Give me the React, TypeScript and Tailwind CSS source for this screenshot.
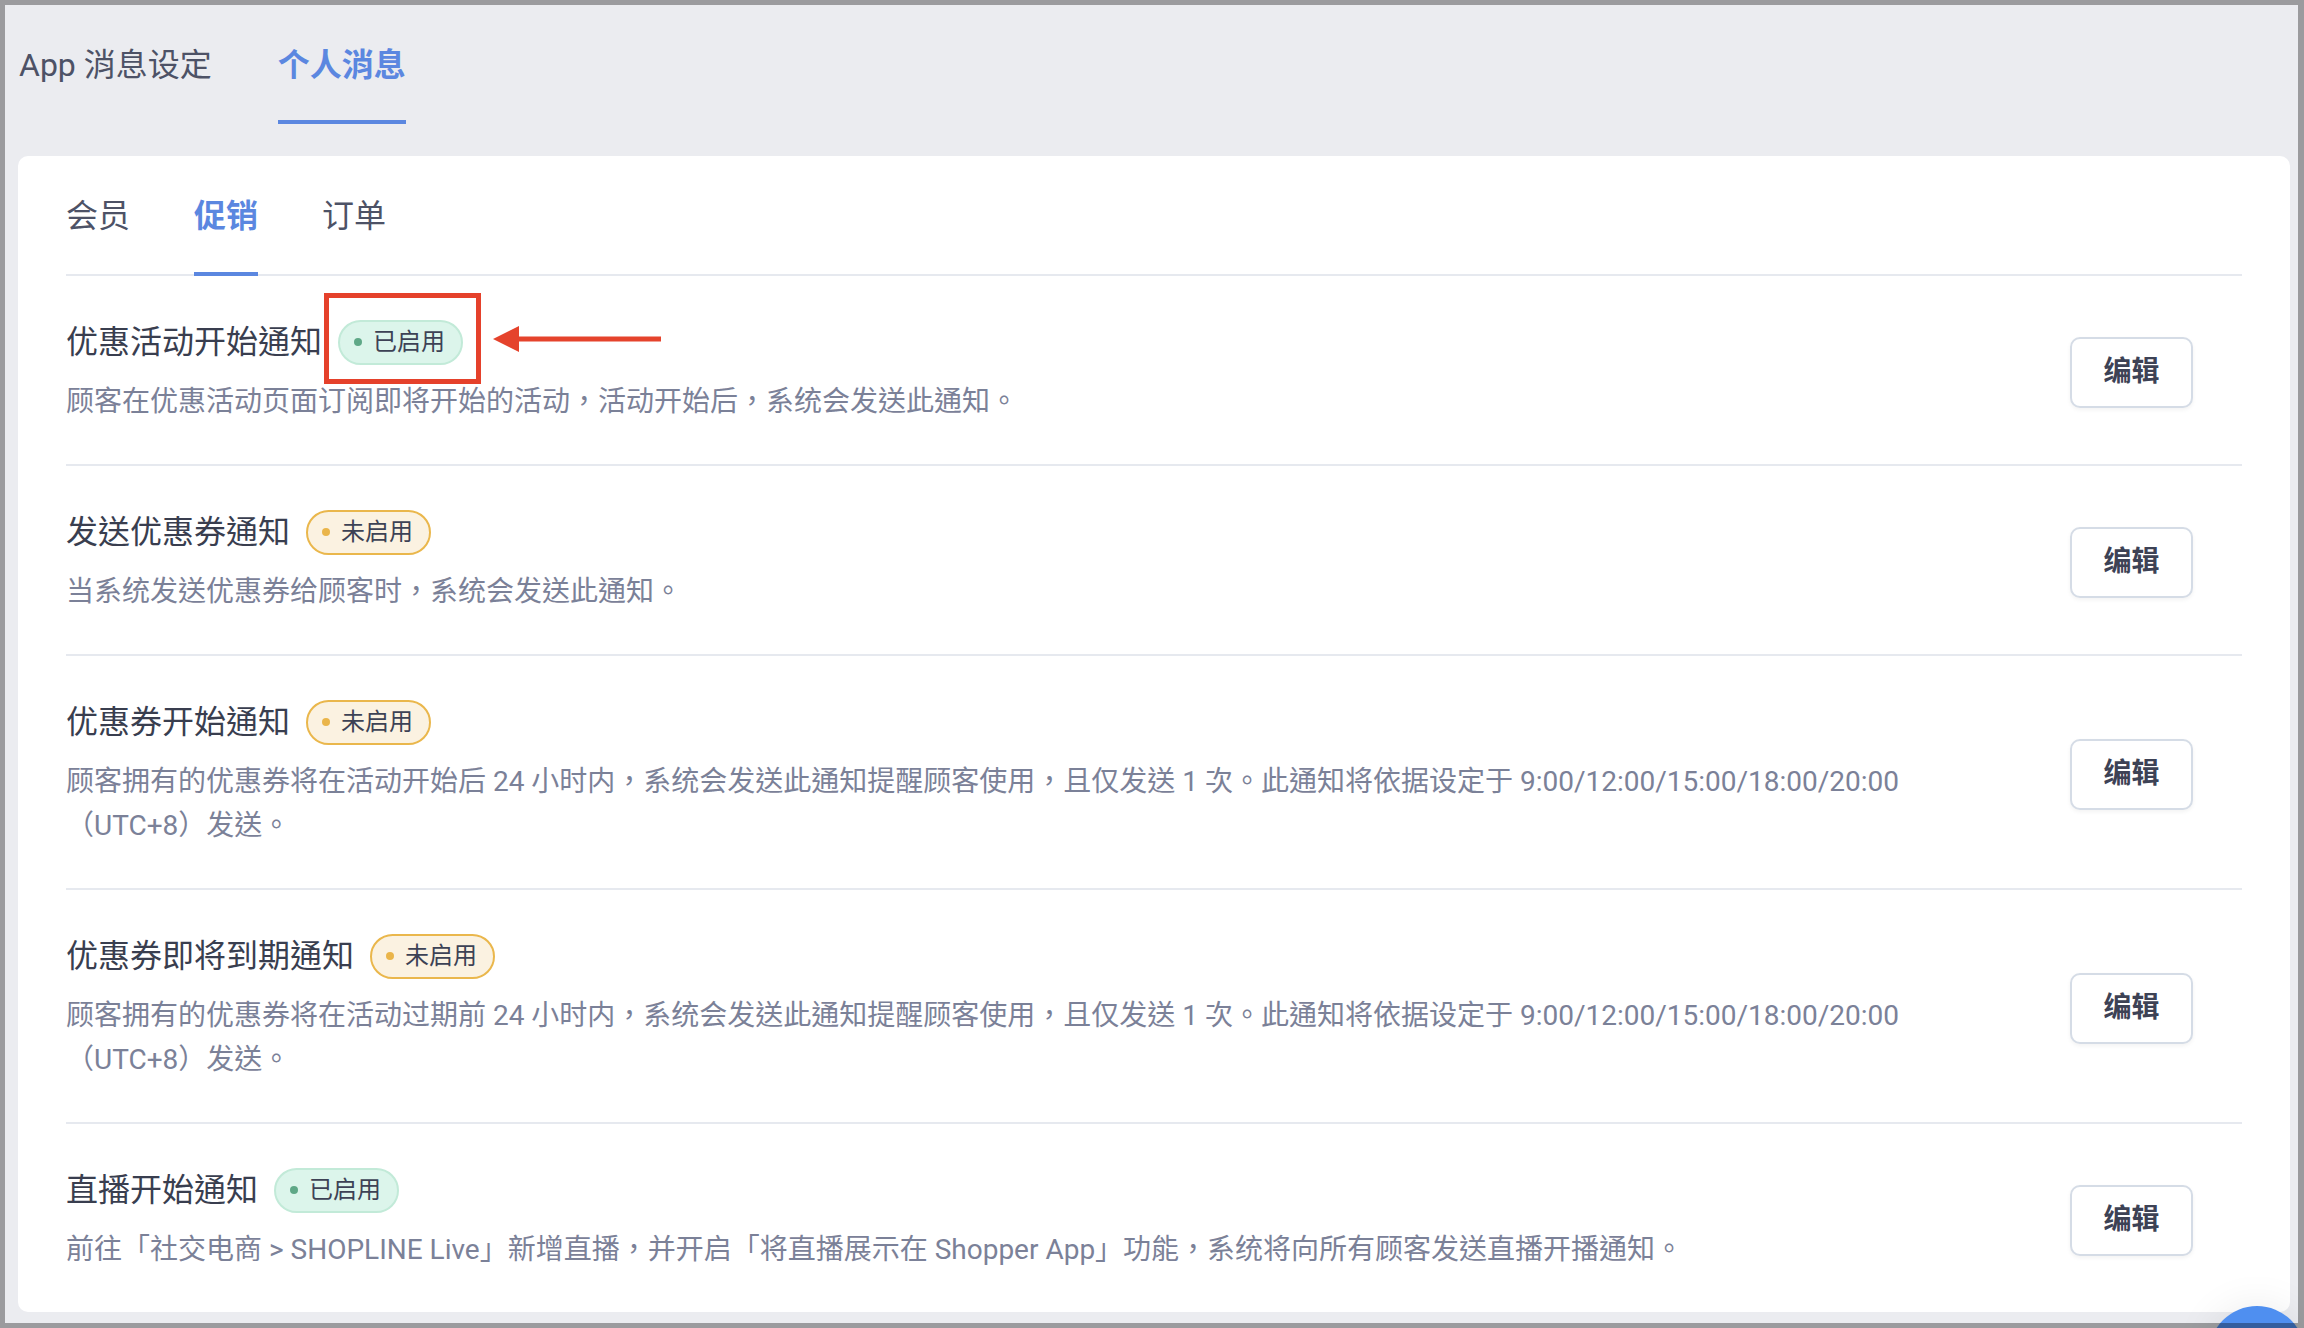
const font = "font-[Roboto,'Noto_Sans_CJK_TC',sans-serif]";

type Notice = {
  title: string;
  enabled: boolean;
  desc: string;
  marked?: boolean;
};

const notices: Notice[] = [
  {
    title: '优惠活动开始通知',
    enabled: true,
    desc: '顾客在优惠活动页面订阅即将开始的活动，活动开始后，系统会发送此通知。',
    marked: true,
  },
  {
    title: '发送优惠券通知',
    enabled: false,
    desc: '当系统发送优惠券给顾客时，系统会发送此通知。',
  },
  {
    title: '优惠券开始通知',
    enabled: false,
    desc: '顾客拥有的优惠券将在活动开始后 24 小时内，系统会发送此通知提醒顾客使用，且仅发送 1 次。此通知将依据设定于 9:00/12:00/15:00/18:00/20:00（UTC+8）发送。',
  },
  {
    title: '优惠券即将到期通知',
    enabled: false,
    desc: '顾客拥有的优惠券将在活动过期前 24 小时内，系统会发送此通知提醒顾客使用，且仅发送 1 次。此通知将依据设定于 9:00/12:00/15:00/18:00/20:00（UTC+8）发送。',
  },
  {
    title: '直播开始通知',
    enabled: true,
    desc: '前往「社交电商 > SHOPLINE Live」新增直播，并开启「将直播展示在 Shopper App」功能，系统将向所有顾客发送直播开播通知。',
  },
];

function StatusBadge({ enabled }: { enabled: boolean }) {
  if (enabled) {
    return (
      <span className="inline-flex items-center h-[45px] rounded-full border-2 border-[#c2ead8] bg-[#dcf5eb] pl-[14px] pr-[16px]">
        <span className="w-2 h-2 rounded-full bg-[#5fa887]" />
        <span className="ml-[11px] text-[24px] leading-none text-[#3d4255]">已启用</span>
      </span>
    );
  }
  return (
    <span className="inline-flex items-center h-[45px] rounded-full border-2 border-[#eab74c] bg-[#fbf2e1] pl-[14px] pr-[16px]">
      <span className="w-2 h-2 rounded-full bg-[#eab54a]" />
      <span className="ml-[11px] text-[24px] leading-none text-[#3d4255]">未启用</span>
    </span>
  );
}

function NoticeRow({ item, last }: { item: Notice; last: boolean }) {
  return (
    <div className={last ? 'pt-[44px] pb-[40px]' : 'pt-[44px] pb-[40px] border-b-2 border-[#e6e9ef]'}>
      <div className="flex items-center pr-[49px]">
        <div className="flex-1 min-w-0">
          <div className="flex items-center gap-4 h-[44px]">
            <span className="text-[32px] leading-[44px] text-[#393e4f]">{item.title}</span>
            <span className="relative inline-flex">
              <StatusBadge enabled={item.enabled} />
              {item.marked && (
                <>
                  {/* annotation box + arrow */}
                  <span className="absolute -left-[14px] -top-[27px] w-[157px] h-[91px] border-[5px] border-[#e5412b] pointer-events-none" />
                  <svg
                    className="absolute left-[155px] top-[6px]"
                    width="170"
                    height="26"
                    viewBox="0 0 170 26"
                  >
                    <polygon points="0,13 26,0 26,26" fill="#e5432c" />
                    <rect x="24" y="10.5" width="144" height="5" fill="#e5432c" />
                  </svg>
                </>
              )}
            </span>
          </div>
          <p className="mt-4 max-w-[1900px] text-[28px] leading-[44px] text-[#7b8198]">{item.desc}</p>
        </div>
        <button className="w-[123px] h-[71px] rounded-[10px] border-2 border-[#d5dce6] bg-white shadow-[0_2px_4px_rgba(0,0,0,0.05)] text-[28px] font-bold text-[#3d4255]">
          编辑
        </button>
      </div>
    </div>
  );
}

export default function App() {
  const subTabs = ['会员', '促销', '订单'];

  return (
    <div className={`relative w-[2304px] h-[1328px] overflow-hidden bg-[#ebecf0] ${font}`}>
      {/* top tabs */}
      <div className="flex gap-[66px] pl-[19px] pt-[43px]">
        <div className="pb-[33px] text-[32px] leading-[44px] text-[#4d5266]">App 消息设定</div>
        <div className="pb-[33px] border-b-4 border-[#5b87e0] text-[32px] leading-[44px] font-bold text-[#5b87e0]">
          个人消息
        </div>
      </div>

      {/* card */}
      <div className="ml-[18px] mt-[32px] w-[2272px] rounded-[10px] bg-white px-12 pt-[38px]">
        <div className="flex gap-[64px] border-b-2 border-[#e6e9ef]">
          {subTabs.map((t) => (
            <div
              key={t}
              className={
                t === '促销'
                  ? 'pb-[34px] -mb-[2px] border-b-4 border-[#5b87e0] text-[32px] leading-[44px] font-bold text-[#5b87e0]'
                  : 'pb-[34px] -mb-[2px] border-b-4 border-transparent text-[32px] leading-[44px] text-[#4d5266]'
              }
            >
              {t}
            </div>
          ))}
        </div>

        {notices.map((n, i) => (
          <NoticeRow key={n.title} item={n} last={i === notices.length - 1} />
        ))}
      </div>

      {/* floating chat button, clipped by the window */}
      <div className="absolute left-[2209px] top-[1306px] w-[96px] h-[96px] rounded-full bg-[#4f8ff0] shadow-[0_0_40px_rgba(0,0,0,0.08)]" />

      {/* window frame */}
      <div className="absolute inset-0 pointer-events-none border-black/[0.34] border-l-[5px] border-t-[5px] border-r-[6px] border-b-[5px]" />
    </div>
  );
}
